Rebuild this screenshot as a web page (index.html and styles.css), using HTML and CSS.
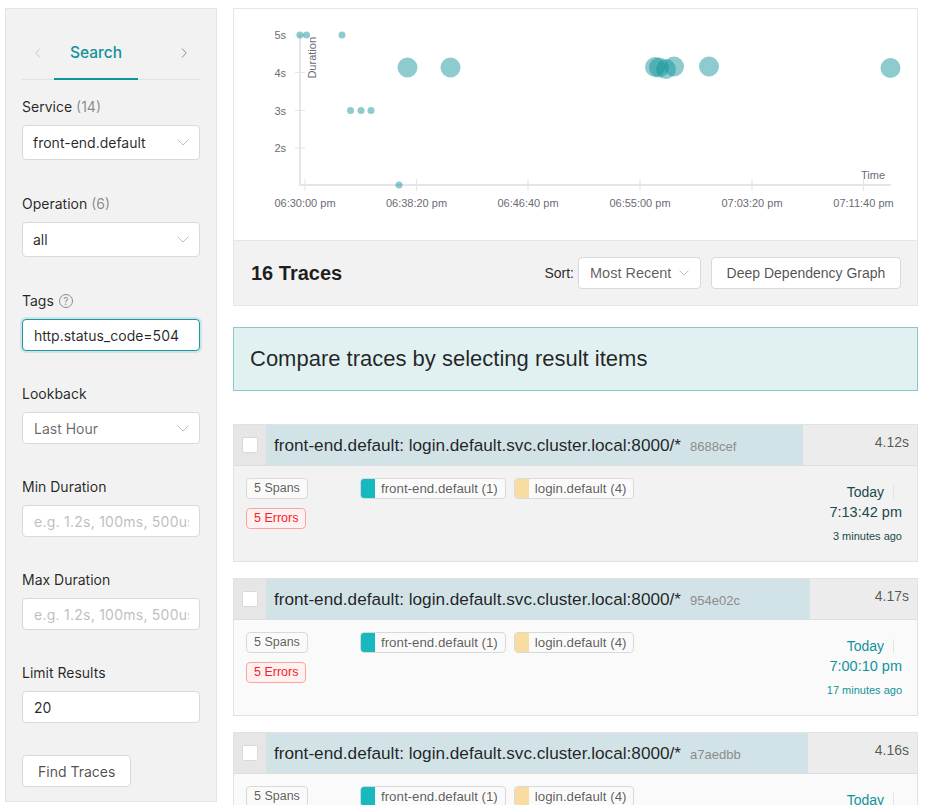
FILE: index.html
```html
<!DOCTYPE html>
<html>
<head>
<meta charset="utf-8">
<title>Jaeger UI - Search</title>
<link rel="stylesheet" href="styles.css">
</head>
<body>
<div class="page">
  <aside class="sidebar">
    <div class="tabs">
      <span class="tab-arrow"><svg width="6" height="10" viewBox="0 0 6 10"><path d="M5 .5.8 5 5 9.5" fill="none" stroke="#c4c4c4"/></svg></span>
      <div class="tab">Search</div>
      <span class="tab-spacer"></span>
      <span class="tab-arrow"><svg width="6" height="10" viewBox="0 0 6 10"><path d="M1 .5 5.2 5 1 9.5" fill="none" stroke="#8c8c8c"/></svg></span>
    </div>
    <div class="form">
      <div class="field field-lg">
        <div class="label">Service <span class="count">(14)</span></div>
        <div class="control lg"><span>front-end.default</span><svg class="chev" width="12" height="7" viewBox="0 0 12 7"><path d="M.5.5 6 6 11.5.5" fill="none" stroke="#bfbfbf"/></svg></div>
      </div>
      <div class="field field-lg">
        <div class="label">Operation <span class="count">(6)</span></div>
        <div class="control lg"><span>all</span><svg class="chev" width="12" height="7" viewBox="0 0 12 7"><path d="M.5.5 6 6 11.5.5" fill="none" stroke="#bfbfbf"/></svg></div>
      </div>
      <div class="field">
        <div class="label">Tags <span class="help">?</span></div>
        <div class="control focused"><span>http.status_code=504</span></div>
      </div>
      <div class="field">
        <div class="label">Lookback</div>
        <div class="control"><span class="soft">Last Hour</span><svg class="chev" width="12" height="7" viewBox="0 0 12 7"><path d="M.5.5 6 6 11.5.5" fill="none" stroke="#bfbfbf"/></svg></div>
      </div>
      <div class="field">
        <div class="label">Min Duration</div>
        <div class="control"><span class="placeholder">e.g. 1.2s, 100ms, 500us</span></div>
      </div>
      <div class="field">
        <div class="label">Max Duration</div>
        <div class="control"><span class="placeholder">e.g. 1.2s, 100ms, 500us</span></div>
      </div>
      <div class="field">
        <div class="label">Limit Results</div>
        <div class="control"><span>20</span></div>
      </div>
      <button class="btn find">Find Traces</button>
    </div>
  </aside>

  <main class="main">
    <section class="chart-card">
      <svg class="chart" width="683" height="231" viewBox="234 9 683 231">
        <g class="axis">
          <line x1="300" y1="35" x2="300" y2="185"/>
          <line x1="299" y1="185" x2="891" y2="185"/>
        </g>
        <g class="tick">
          <line x1="295" y1="35" x2="305" y2="35"/>
          <line x1="295" y1="72.5" x2="305" y2="72.5"/>
          <line x1="295" y1="110.5" x2="305" y2="110.5"/>
          <line x1="295" y1="148" x2="305" y2="148"/>
          <line x1="305" y1="179" x2="305" y2="191"/>
          <line x1="416.5" y1="179" x2="416.5" y2="191"/>
          <line x1="528" y1="179" x2="528" y2="191"/>
          <line x1="640" y1="179" x2="640" y2="191"/>
          <line x1="752" y1="179" x2="752" y2="191"/>
          <line x1="863.5" y1="179" x2="863.5" y2="191"/>
        </g>
        <g class="lbl" text-anchor="end">
          <text x="286" y="39">5s</text>
          <text x="286" y="76.5">4s</text>
          <text x="286" y="114.5">3s</text>
          <text x="286" y="152">2s</text>
        </g>
        <g class="lbl" text-anchor="middle">
          <text x="305" y="207">06:30:00 pm</text>
          <text x="416.5" y="207">06:38:20 pm</text>
          <text x="528" y="207">06:46:40 pm</text>
          <text x="640" y="207">06:55:00 pm</text>
          <text x="752" y="207">07:03:20 pm</text>
          <text x="863.5" y="207">07:11:40 pm</text>
          <text x="873" y="179">Time</text>
        </g>
        <text class="lbl" x="0" y="0" text-anchor="end" transform="translate(316 37) rotate(-90)">Duration</text>
        <g class="dot">
          <circle cx="300" cy="35" r="3.5"/>
          <circle cx="306.5" cy="35" r="3.5"/>
          <circle cx="342" cy="35" r="3.5"/>
          <circle cx="350.5" cy="110.5" r="3.5"/>
          <circle cx="361" cy="110.5" r="3.5"/>
          <circle cx="371" cy="110.5" r="3.5"/>
          <circle cx="399" cy="185" r="3.5"/>
          <circle cx="407.5" cy="67.5" r="10"/>
          <circle cx="450.5" cy="67.5" r="10"/>
          <circle cx="655" cy="67" r="10"/>
          <circle cx="659" cy="67.5" r="10"/>
          <circle cx="666" cy="69" r="10"/>
          <circle cx="674" cy="66.5" r="10"/>
          <circle cx="709" cy="66.5" r="10"/>
          <circle cx="890.5" cy="68" r="10"/>
        </g>
      </svg>
      <div class="results-header">
        <h2 class="count-title">16 Traces</h2>
        <div class="header-controls">
          <span class="sort-label">Sort:</span>
          <div class="sort-select"><span>Most Recent</span><svg width="10" height="6" viewBox="0 0 10 6"><path d="M.5.5 5 5 9.5.5" fill="none" stroke="#bfbfbf"/></svg></div>
          <button class="btn ddg">Deep Dependency Graph</button>
        </div>
      </div>
    </section>

    <div class="compare">Compare traces by selecting result items</div>

    <ul class="results">
      <li class="result active">
        <div class="result-header">
          <div class="check-col"><span class="checkbox"></span></div>
          <div class="title-bar" style="--pct: 82.5%">
            <div class="title">front-end.default: login.default.svc.cluster.local:8000/*<span class="trace-id">8688cef</span></div>
            <div class="duration">4.12s</div>
          </div>
        </div>
        <div class="result-body">
          <div class="counts">
            <span class="tag">5 Spans</span>
            <span class="tag error">5 Errors</span>
          </div>
          <div class="services">
            <span class="svc"><span class="svc-color teal"></span><span class="svc-name">front-end.default (1)</span></span>
            <span class="svc"><span class="svc-color sand"></span><span class="svc-name">login.default (4)</span></span>
          </div>
          <div class="when">
            <div class="date-line">Today<span class="divider"></span></div>
            <div class="time">7:13:42 pm</div>
            <div class="ago">3 minutes ago</div>
          </div>
        </div>
      </li>
      <li class="result">
        <div class="result-header">
          <div class="check-col"><span class="checkbox"></span></div>
          <div class="title-bar" style="--pct: 83.5%">
            <div class="title">front-end.default: login.default.svc.cluster.local:8000/*<span class="trace-id">954e02c</span></div>
            <div class="duration">4.17s</div>
          </div>
        </div>
        <div class="result-body">
          <div class="counts">
            <span class="tag">5 Spans</span>
            <span class="tag error">5 Errors</span>
          </div>
          <div class="services">
            <span class="svc"><span class="svc-color teal"></span><span class="svc-name">front-end.default (1)</span></span>
            <span class="svc"><span class="svc-color sand"></span><span class="svc-name">login.default (4)</span></span>
          </div>
          <div class="when">
            <div class="date-line">Today<span class="divider"></span></div>
            <div class="time">7:00:10 pm</div>
            <div class="ago">17 minutes ago</div>
          </div>
        </div>
      </li>
      <li class="result">
        <div class="result-header">
          <div class="check-col"><span class="checkbox"></span></div>
          <div class="title-bar" style="--pct: 83.2%">
            <div class="title">front-end.default: login.default.svc.cluster.local:8000/*<span class="trace-id">a7aedbb</span></div>
            <div class="duration">4.16s</div>
          </div>
        </div>
        <div class="result-body">
          <div class="counts">
            <span class="tag">5 Spans</span>
            <span class="tag error">5 Errors</span>
          </div>
          <div class="services">
            <span class="svc"><span class="svc-color teal"></span><span class="svc-name">front-end.default (1)</span></span>
            <span class="svc"><span class="svc-color sand"></span><span class="svc-name">login.default (4)</span></span>
          </div>
          <div class="when">
            <div class="date-line">Today<span class="divider"></span></div>
            <div class="time">6:59:52 pm</div>
            <div class="ago">17 minutes ago</div>
          </div>
        </div>
      </li>
    </ul>
  </main>
</div>
</body>
</html>
```

FILE: styles.css
```css
* { box-sizing: border-box; }

html, body { margin: 0; padding: 0; background: #fff; }

body {
  font-family: Inter, "Noto Sans", sans-serif;
  color: rgba(0, 0, 0, 0.85);
}

.page {
  display: grid;
  grid-template-columns: 212px 685px;
  column-gap: 16px;
  align-items: start;
  padding: 8px 0 0 5px;
}

/* ---------- sidebar ---------- */
.sidebar {
  background: #f2f2f2;
  border: 1px solid #e4e4e4;
  padding: 0 16px 14px;
}

.tabs {
  display: flex;
  align-items: flex-end;
  height: 71px;
  border-bottom: 1px solid #e2e2e2;
}

.tab-arrow {
  width: 32px;
  height: 22px;
  margin-bottom: 15px;
  display: flex;
  align-items: center;
  justify-content: center;
}

.tab-spacer { flex: 1; }

.tab {
  padding: 0 16px 14px;
  margin-bottom: -1px;
  border-bottom: 2px solid #11939a;
  color: #11939a;
  font-size: 15.5px;
  line-height: 22px;
  font-weight: 500;
}

.form { padding-top: 16px; }

.field { margin-bottom: 32px; }
.field-lg { margin-bottom: 33px; }

.label {
  font-size: 14px;
  line-height: 22px;
  margin-bottom: 7px;
  color: rgba(0, 0, 0, 0.85);
  display: flex;
  align-items: center;
}

.count { color: rgba(0, 0, 0, 0.45); margin-left: 4px; }

.help {
  width: 14px;
  height: 14px;
  margin-left: 5px;
  border: 1px solid #8c8c8c;
  border-radius: 50%;
  color: #8c8c8c;
  font-size: 10px;
  line-height: 12px;
  text-align: center;
}

.control {
  height: 32px;
  background: #fff;
  border: 1px solid #d9d9d9;
  border-radius: 4px;
  padding: 0 10px 0 11px;
  display: flex;
  align-items: center;
  justify-content: space-between;
  font-size: 14px;
  color: rgba(0, 0, 0, 0.85);
  white-space: nowrap;
  overflow: hidden;
}

.control.lg { height: 35px; padding-left: 10px; }

.control.focused {
  border-color: #1a9aa0;
  box-shadow: 0 0 0 2px rgba(17, 147, 154, 0.15);
}

.chev { flex: none; }

.soft { color: rgba(0, 0, 0, 0.6); }

.placeholder {
  color: #bfbfbf;
  overflow: hidden;
  letter-spacing: 0.25px;
  min-width: 0;
}

.btn {
  height: 32px;
  background: #fff;
  border: 1px solid #d9d9d9;
  border-radius: 4px;
  font-family: inherit;
  font-size: 14px;
  color: rgba(0, 0, 0, 0.7);
  padding: 0 15px;
  cursor: pointer;
}

.find { display: block; }

/* ---------- main ---------- */
.main {
  font-family: "Liberation Sans", Arial, sans-serif;
}

.chart-card { border: 1px solid #e6e6e6; }

.chart { display: block; background: #fff; }

.axis line { stroke: #e4e4e9; stroke-width: 2; }
.tick line { stroke: #e4e4e9; stroke-width: 1; }
.lbl { font-family: "Liberation Sans", Arial, sans-serif; font-size: 11px; fill: #6b6b76; }
.dot circle { fill: rgba(17, 147, 154, 0.48); }

.results-header {
  height: 65px;
  border-top: 1px solid #e6e6e6;
  background: #f2f2f2;
  display: flex;
  align-items: center;
  justify-content: space-between;
  padding: 0 16px 0 17px;
}

.count-title {
  margin: 0;
  font-size: 20px;
  font-weight: 700;
  color: rgba(0, 0, 0, 0.88);
}

.header-controls { display: flex; align-items: center; }

.sort-label { font-size: 14px; margin-right: 4px; color: rgba(0, 0, 0, 0.85); }

.sort-select {
  width: 123px;
  height: 32px;
  background: #fff;
  border: 1px solid #d9d9d9;
  border-radius: 4px;
  padding: 0 11px;
  display: flex;
  align-items: center;
  justify-content: space-between;
  font-size: 14.5px;
  color: rgba(0, 0, 0, 0.65);
}

.ddg {
  margin-left: 10px;
  width: 190px;
  font-family: "Liberation Sans", Arial, sans-serif;
  font-size: 14px;
  color: rgba(0, 0, 0, 0.7);
  padding: 0;
}

.compare {
  margin-top: 21px;
  height: 64px;
  border: 1px solid #8cc6c8;
  background: #e1f0f0;
  display: flex;
  align-items: center;
  padding-left: 16px;
  font-size: 22px;
  color: rgba(0, 0, 0, 0.85);
}

.results { list-style: none; margin: 33px 0 0; padding: 0; }

.result { border: 1px solid #e2e2e2; margin-bottom: 16px; }

.result-header {
  display: flex;
  height: 41px;
  border-bottom: 1px solid #dedede;
}

.check-col {
  width: 32px;
  background: #e6e6e6;
  display: flex;
  align-items: center;
  justify-content: center;
}

.checkbox {
  width: 16px;
  height: 16px;
  background: #fff;
  border: 1px solid #d9d9d9;
  border-radius: 2px;
}

.title-bar {
  flex: 1;
  display: flex;
  justify-content: space-between;
  padding: 0 8px;
  background: linear-gradient(90deg, #d2e3e7 var(--pct), #ececec var(--pct));
}

.title {
  align-self: center;
  font-size: 17.2px;
  color: rgba(0, 0, 0, 0.86);
  white-space: nowrap;
}

.trace-id {
  margin-left: 9px;
  font-size: 13px;
  color: #8c8c8c;
}

.duration {
  padding-top: 7px;
  font-size: 14px;
  line-height: 20px;
  color: rgba(0, 0, 0, 0.65);
}

.result-body {
  display: grid;
  grid-template-columns: 114px 1fr auto;
  height: 95px;
  padding: 12px 15px 12px 12px;
  background: #fafafa;
}

.result.active .result-body { background: #f2f2f2; }

.counts {
  display: flex;
  flex-direction: column;
  align-items: flex-start;
  gap: 9px;
}

.tag {
  display: inline-block;
  height: 21px;
  line-height: 19px;
  padding: 0 7px;
  font-size: 12.5px;
  color: rgba(0, 0, 0, 0.65);
  background: #fafafa;
  border: 1px solid #d9d9d9;
  border-radius: 4px;
}

.tag.error {
  color: #f5222d;
  background: #fff1f0;
  border-color: #ffa39e;
}

.services { display: flex; align-items: flex-start; gap: 8px; }

.svc {
  display: inline-flex;
  height: 21px;
  background: #fafafa;
  border: 1px solid #d9d9d9;
  border-radius: 4px;
  overflow: hidden;
  font-size: 13.3px;
  line-height: 19px;
  color: rgba(0, 0, 0, 0.65);
}

.svc-color { width: 14px; }
.svc-color.teal { background: #17b8be; }
.svc-color.sand { background: #f8dca1; }

.svc-name { padding: 0 7px 0 6px; }

.when {
  padding-top: 4px;
  text-align: right;
  color: #11939a;
}

.result.active .when { color: #1b4a4c; }

.date-line {
  display: flex;
  justify-content: flex-end;
  align-items: center;
  font-size: 14px;
  line-height: 20px;
}

.divider {
  width: 1px;
  height: 14px;
  background: #e4e4e4;
  margin: 0 8px 0 9px;
}

.time { font-size: 14.5px; line-height: 21px; }

.ago { margin-top: 5px; font-size: 11px; line-height: 16px; }
```
